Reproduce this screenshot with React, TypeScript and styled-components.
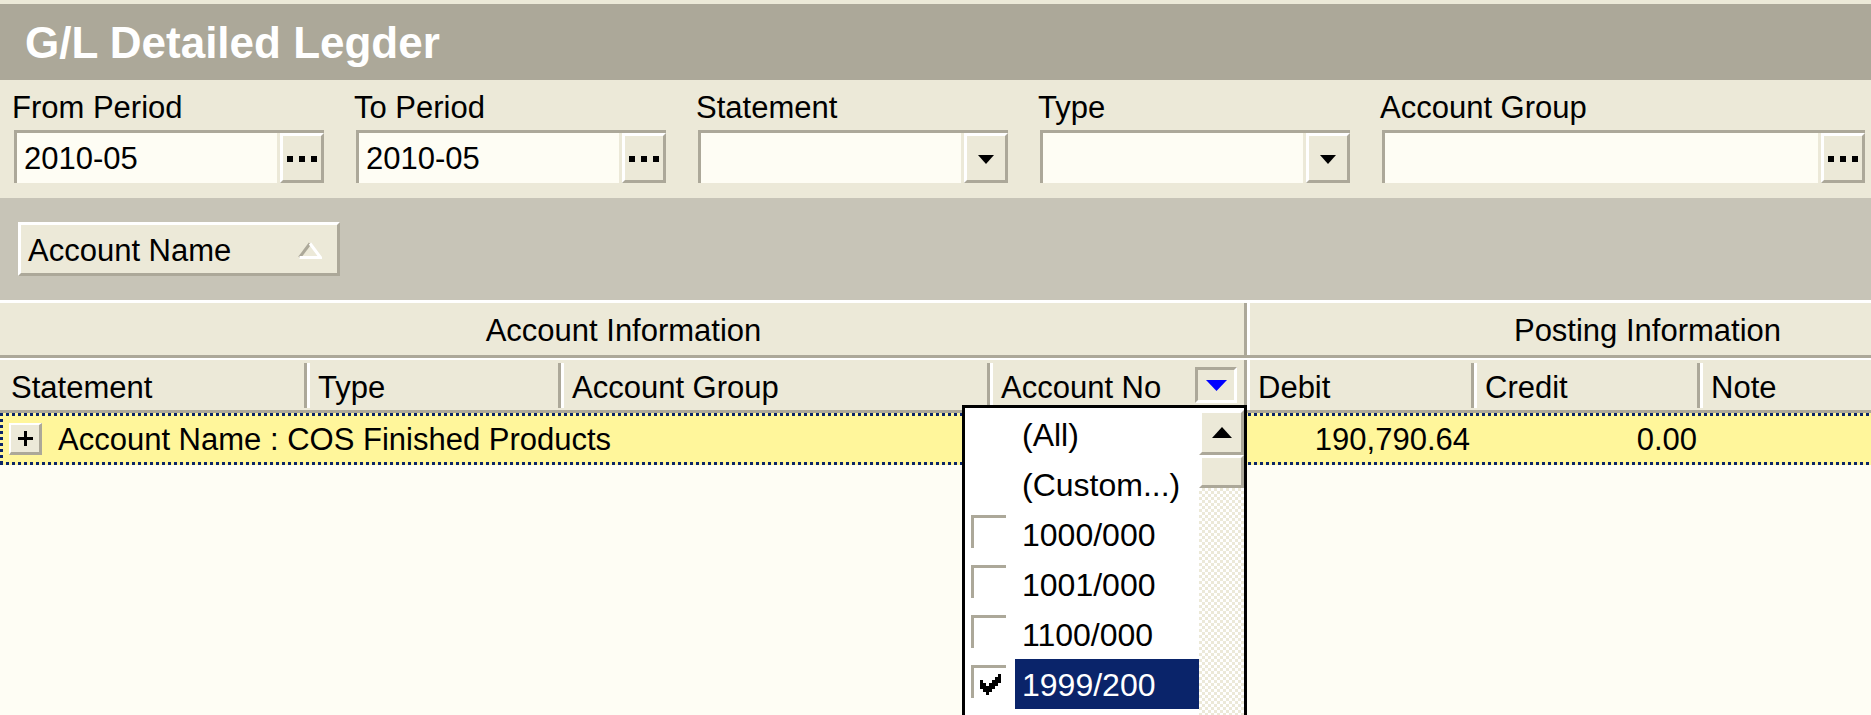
import React from 'react';
import styled, { createGlobalStyle } from 'styled-components';

const colors = {
  face: '#ECE9D8',
  shadow: '#ACA899',
  title: '#ACA899',
  groupPanel: '#C7C4B7',
  cream: '#FEFDF4',
  yellow: '#FFF69B',
  navy: '#0A246A',
  white: '#FFFFFF',
  black: '#000000',
};

const font = `'Liberation Sans', Arial, sans-serif`;

const GlobalStyle = createGlobalStyle`
  html, body {
    margin: 0;
    padding: 0;
    overflow: hidden;
    background: ${colors.face};
  }
  #root {
    height: 715px;
  }
`;

const Window = styled.div`
  position: relative;
  height: 715px;
  padding-top: 4px;
  box-sizing: border-box;
  display: flex;
  flex-direction: column;
  background: ${colors.face};
  font-family: ${font};
  font-size: 31px;
  color: ${colors.black};
  overflow: hidden;
`;

const TitleBar = styled.div`
  flex: none;
  height: 76px;
  display: flex;
  align-items: center;
  padding: 2px 0 0 25px;
  box-sizing: border-box;
  background: ${colors.title};
  color: ${colors.white};
  font-weight: bold;
  font-size: 44px;
`;

const FilterPanel = styled.div`
  flex: none;
  height: 118px;
  box-sizing: border-box;
  display: flex;
  gap: 32px;
  padding: 8px 6px 0 14px;
`;

const Field = styled.div<{ $grow?: boolean }>`
  display: flex;
  flex-direction: column;
  flex: ${(p) => (p.$grow ? '1' : 'none')};
  width: ${(p) => (p.$grow ? 'auto' : '310px')};
`;

const Label = styled.div`
  height: 36px;
  line-height: 36px;
  margin: 2px 0 4px -2px;
  white-space: nowrap;
`;

const EditBox = styled.div`
  display: flex;
  height: 53px;
  box-sizing: border-box;
  border-top: 3px solid ${colors.shadow};
  border-left: 3px solid ${colors.shadow};
`;

const EditText = styled.div`
  flex: 1;
  background: ${colors.cream};
  border-right: 3px solid ${colors.face};
  padding: 1px 0 0 7px;
  line-height: 50px;
`;

const EditButton = styled.div`
  flex: none;
  width: 44px;
  box-sizing: border-box;
  display: flex;
  align-items: center;
  justify-content: center;
  gap: 6px;
  padding-top: 2px;
  background: ${colors.face};
  border-top: 3px solid ${colors.white};
  border-left: 3px solid ${colors.white};
  border-right: 3px solid ${colors.shadow};
  border-bottom: 3px solid ${colors.shadow};
`;

const Dot = styled.span`
  width: 6px;
  height: 6px;
  background: ${colors.black};
`;

const GroupPanel = styled.div`
  flex: none;
  height: 102px;
  box-sizing: border-box;
  padding: 24px 0 0 18px;
  background: ${colors.groupPanel};
`;

const GroupChip = styled.div`
  width: 322px;
  height: 54px;
  box-sizing: border-box;
  display: flex;
  align-items: center;
  justify-content: space-between;
  padding: 3px 15px 0 7px;
  background: ${colors.face};
  border-top: 3px solid ${colors.white};
  border-left: 3px solid ${colors.white};
  border-right: 3px solid ${colors.shadow};
  border-bottom: 3px solid ${colors.shadow};
`;

const Grid = styled.div`
  flex: 1;
  background: ${colors.cream};
  overflow: hidden;
`;

const GridInner = styled.div`
  width: 2048px;
`;

const BandRow = styled.div`
  display: flex;
  height: 58px;
  box-sizing: border-box;
  background: ${colors.face};
  border-top: 3px solid ${colors.white};
  border-bottom: 3px solid ${colors.shadow};
`;

const HeaderRow = styled.div`
  display: flex;
  height: 55px;
  box-sizing: border-box;
  background: ${colors.face};
  border-top: 2px solid ${colors.white};
  border-bottom: 3px solid ${colors.shadow};
`;

const Separator = styled.span<{ $full?: boolean }>`
  position: absolute;
  left: -3px;
  top: ${(p) => (p.$full ? '0' : '3px')};
  bottom: ${(p) => (p.$full ? '0' : '2px')};
  width: 6px;
  background: linear-gradient(90deg, ${colors.shadow} 0 3px, ${colors.white} 3px 6px);
`;

const BandCell = styled.div<{ $width: number }>`
  position: relative;
  flex: none;
  width: ${(p) => p.$width}px;
  box-sizing: border-box;
  display: flex;
  align-items: center;
  justify-content: center;
  padding-top: 3px;
`;

const HeaderCell = styled.div<{ $width: number }>`
  position: relative;
  flex: none;
  width: ${(p) => p.$width}px;
  box-sizing: border-box;
  display: flex;
  align-items: center;
  justify-content: space-between;
  padding: 0 10px 0 11px;
  white-space: nowrap;
`;

const HeaderTitle = styled.span`
  padding-top: 5px;
`;

const FilterButton = styled.div`
  width: 42px;
  height: 36px;
  box-sizing: border-box;
  display: flex;
  align-items: center;
  justify-content: center;
  background: ${colors.face};
  border-top: 3px solid ${colors.shadow};
  border-left: 3px solid ${colors.shadow};
  border-right: 3px solid ${colors.white};
  border-bottom: 3px solid ${colors.white};
`;

const dots = (dir: string) =>
  `repeating-linear-gradient(${dir}, ${colors.navy} 0 3px, transparent 3px 6px)`;

const GroupRow = styled.div`
  display: grid;
  grid-template-columns: 1247px 227px 226px 348px;
  height: 52px;
  align-items: center;
  background:
    ${dots('90deg')} left top / 100% 3px no-repeat,
    ${dots('90deg')} left bottom / 100% 3px no-repeat,
    ${dots('180deg')} left top / 3px 100% no-repeat,
    ${colors.yellow};
`;

const GroupCaption = styled.div`
  display: flex;
  align-items: center;
  gap: 16px;
  padding-left: 9px;
  white-space: nowrap;
`;

const CaptionText = styled.span`
  padding-top: 2px;
`;

const ExpandBox = styled.div`
  width: 33px;
  height: 32px;
  box-sizing: border-box;
  display: flex;
  align-items: center;
  justify-content: center;
  background: ${colors.face};
  border-top: 2px solid ${colors.white};
  border-left: 2px solid ${colors.white};
  border-right: 3px solid ${colors.shadow};
  border-bottom: 3px solid ${colors.shadow};
`;

const Amount = styled.div<{ $pad: number }>`
  text-align: right;
  padding: 2px ${(p) => p.$pad}px 0 0;
`;

const FilterPopup = styled.div`
  position: absolute;
  left: 962px;
  top: 405px;
  width: 285px;
  height: 330px;
  box-sizing: border-box;
  display: flex;
  background: ${colors.white};
  border: 3px solid ${colors.black};
  font-size: 32px;
`;

const ItemList = styled.div`
  flex: 1;
  padding-top: 1px;
`;

const Item = styled.div`
  display: flex;
  height: 50px;
`;

const CheckCell = styled.div`
  flex: none;
  width: 50px;
  padding: 6px 0 0 6px;
  box-sizing: border-box;
`;

const CheckBox = styled.div`
  width: 35px;
  height: 33px;
  box-sizing: border-box;
  display: flex;
  align-items: center;
  justify-content: center;
  padding: 2px 0 0 1px;
  border-top: 3px solid ${colors.shadow};
  border-left: 3px solid ${colors.shadow};
  background: ${colors.white};
`;

const ItemLabel = styled.div<{ $selected?: boolean }>`
  flex: 1;
  padding: 1px 0 0 7px;
  line-height: 50px;
  background: ${(p) => (p.$selected ? colors.navy : 'transparent')};
  color: ${(p) => (p.$selected ? colors.white : colors.black)};
  white-space: nowrap;
`;

const ScrollBar = styled.div`
  flex: none;
  width: 45px;
  display: flex;
  flex-direction: column;
  padding-top: 2px;
`;

const ScrollButton = styled.div<{ $height: number }>`
  flex: none;
  height: ${(p) => p.$height}px;
  box-sizing: border-box;
  display: flex;
  align-items: center;
  justify-content: center;
  background: ${colors.face};
  border-top: 3px solid ${colors.white};
  border-left: 3px solid ${colors.white};
  border-right: 3px solid ${colors.shadow};
  border-bottom: 3px solid ${colors.shadow};
`;

const ScrollTrack = styled.div`
  flex: 1;
  background: repeating-conic-gradient(${colors.face} 0 25%, ${colors.white} 0 50%) 0 0 / 6px 6px;
`;

const DownArrow = ({ color = colors.black, w = 16, h = 9 }: { color?: string; w?: number; h?: number }) => (
  <svg width={w} height={h} viewBox={`0 0 ${w} ${h}`}>
    <polygon points={`0,0 ${w},0 ${w / 2},${h}`} fill={color} />
  </svg>
);

const UpArrow = () => (
  <svg width="20" height="11" viewBox="0 0 20 11">
    <polygon points="0,11 20,11 10,0" fill={colors.black} />
  </svg>
);

const SortGlyph = () => (
  <svg width="24" height="17" viewBox="0 0 24 17">
    <polyline points="12,1.5 1.5,15.5" stroke={colors.shadow} strokeWidth="3" fill="none" />
    <polyline points="12,1.5 22.5,15.5 1.5,15.5" stroke={colors.white} strokeWidth="3" fill="none" />
  </svg>
);

const PlusGlyph = () => (
  <svg width="15" height="15" viewBox="0 0 15 15">
    <rect x="0" y="6" width="15" height="3" fill={colors.black} />
    <rect x="6" y="0" width="3" height="15" fill={colors.black} />
  </svg>
);

// the classic 7x7 check mark, drawn 3x
const CHECK_PIXELS = [
  [6, 0], [5, 1], [6, 1], [0, 2], [4, 2], [5, 2], [6, 2],
  [0, 3], [1, 3], [3, 3], [4, 3], [5, 3], [0, 4], [1, 4], [2, 4], [3, 4], [4, 4],
  [1, 5], [2, 5], [3, 5], [2, 6],
];

const CheckMark = () => (
  <svg width="21" height="21" viewBox="0 0 21 21">
    {CHECK_PIXELS.map(([x, y]) => (
      <rect key={`${x}-${y}`} x={x * 3} y={y * 3} width="3" height="3" fill={colors.black} />
    ))}
  </svg>
);

type FilterField = { label: string; value?: string; kind: 'ellipsis' | 'combo'; grow?: boolean };

const FILTERS: FilterField[] = [
  { label: 'From Period', value: '2010-05', kind: 'ellipsis' },
  { label: 'To Period', value: '2010-05', kind: 'ellipsis' },
  { label: 'Statement', kind: 'combo' },
  { label: 'Type', kind: 'combo' },
  { label: 'Account Group', kind: 'ellipsis', grow: true },
];

const COLUMNS = [
  { title: 'Statement', width: 307 },
  { title: 'Type', width: 254 },
  { title: 'Account Group', width: 429 },
  { title: 'Account No', width: 257, filter: true },
  { title: 'Debit', width: 227, full: true },
  { title: 'Credit', width: 226 },
  { title: 'Note', width: 348 },
];

const FILTER_ITEMS = [
  { label: '(All)' },
  { label: '(Custom...)' },
  { label: '1000/000', check: true },
  { label: '1001/000', check: true },
  { label: '1100/000', check: true },
  { label: '1999/200', check: true, checked: true, selected: true },
];

export default function App() {
  return (
    <>
      <GlobalStyle />
      <Window>
        <TitleBar>G/L Detailed Legder</TitleBar>

        <FilterPanel>
          {FILTERS.map((f) => (
            <Field key={f.label} $grow={f.grow}>
              <Label>{f.label}</Label>
              <EditBox>
                <EditText>{f.value}</EditText>
                <EditButton>
                  {f.kind === 'ellipsis' ? (
                    <>
                      <Dot />
                      <Dot />
                      <Dot />
                    </>
                  ) : (
                    <DownArrow />
                  )}
                </EditButton>
              </EditBox>
            </Field>
          ))}
        </FilterPanel>

        <GroupPanel>
          <GroupChip>
            <span>Account Name</span>
            <SortGlyph />
          </GroupChip>
        </GroupPanel>

        <Grid>
          <GridInner>
            <BandRow>
              <BandCell $width={1247}>Account Information</BandCell>
              <BandCell $width={801}>
                <Separator $full />
                Posting Information
              </BandCell>
            </BandRow>
            <HeaderRow>
              {COLUMNS.map((c, i) => (
                <HeaderCell key={c.title} $width={c.width}>
                  {i > 0 && <Separator $full={c.full} />}
                  <HeaderTitle>{c.title}</HeaderTitle>
                  {c.filter && (
                    <FilterButton>
                      <DownArrow color="#0000FF" w={21} h={11} />
                    </FilterButton>
                  )}
                </HeaderCell>
              ))}
            </HeaderRow>
            <GroupRow>
              <GroupCaption>
                <ExpandBox>
                  <PlusGlyph />
                </ExpandBox>
                <CaptionText>Account Name : COS Finished Products</CaptionText>
              </GroupCaption>
              <Amount $pad={4}>190,790.64</Amount>
              <Amount $pad={3}>0.00</Amount>
              <div />
            </GroupRow>
          </GridInner>
        </Grid>

        <FilterPopup>
          <ItemList>
            {FILTER_ITEMS.map((item) => (
              <Item key={item.label}>
                <CheckCell>
                  {item.check && <CheckBox>{item.checked && <CheckMark />}</CheckBox>}
                </CheckCell>
                <ItemLabel $selected={item.selected}>{item.label}</ItemLabel>
              </Item>
            ))}
          </ItemList>
          <ScrollBar>
            <ScrollButton $height={45}>
              <UpArrow />
            </ScrollButton>
            <ScrollButton $height={33} />
            <ScrollTrack />
          </ScrollBar>
        </FilterPopup>
      </Window>
    </>
  );
}
